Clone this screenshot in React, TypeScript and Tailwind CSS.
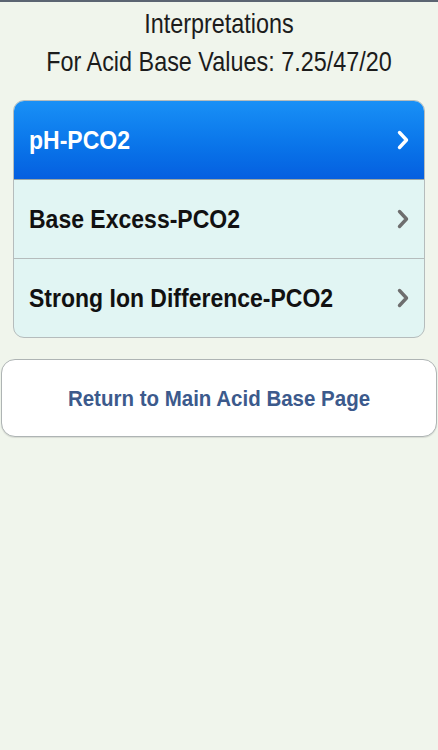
import React from "react";

function Chevron({ color }: { color: string }) {
  return (
    <svg width="14" height="24" viewBox="0 0 14 24" fill="none">
      <path d="M3.5 4.5 L10.5 12 L3.5 19.5" stroke={color} strokeWidth="3.4" strokeLinecap="round" strokeLinejoin="round" />
    </svg>
  );
}

export default function App() {
  const rows = ["Base Excess-PCO2", "Strong Ion Difference-PCO2"];
  return (
    <div className="w-[438px] h-[750px] bg-[#f0f5ec] flex flex-col" style={{ fontFamily: '"Liberation Sans", Arial, sans-serif' }}>
      <div className="h-[2px] bg-[#5b6572]" />
      <div className="flex flex-col items-center pt-[8px] text-[23.4px] leading-[28px] text-[#1c1c1c]">
        <div className="inline-block scale-y-[1.18]">Interpretations</div>
        <div className="inline-block scale-y-[1.18] mt-[10px]">For Acid Base Values: 7.25/47/20</div>
      </div>
      <div className="mx-[13px] mt-[24px] rounded-[11px] border border-[#b5bcbc] overflow-hidden bg-[#e1f5f3]">
        <div className="h-[78px] flex items-center justify-between pl-[15px] pr-[14px] bg-gradient-to-b from-[#1990f6] to-[#065fe0] text-white font-bold text-[23px]">
          <span className="inline-block scale-y-[1.12]">pH-PCO2</span>
          <Chevron color="#ffffff" />
        </div>
        {rows.map((r, i) => (
          <div key={r} className={`h-[79px] flex items-center justify-between pl-[15px] pr-[14px] text-[#111] font-bold text-[23px] border-t ${i === 0 ? "border-[#9aa6a6]" : "border-[#b5bcbc]"}`}>
            <span className="inline-block scale-y-[1.12]">{r}</span>
            <Chevron color="#6e6e6e" />
          </div>
        ))}
      </div>
      <div className="mx-[1px] mt-[21px] h-[78px] rounded-[14px] border border-[#aeb4b4] bg-white flex items-center justify-center text-[20.5px] font-bold text-[#3c5a8c] shadow-[0_1px_1px_rgba(0,0,0,0.1)]">
        <span className="inline-block scale-y-[1.12]">Return to Main Acid Base Page</span>
      </div>
    </div>
  );
}
